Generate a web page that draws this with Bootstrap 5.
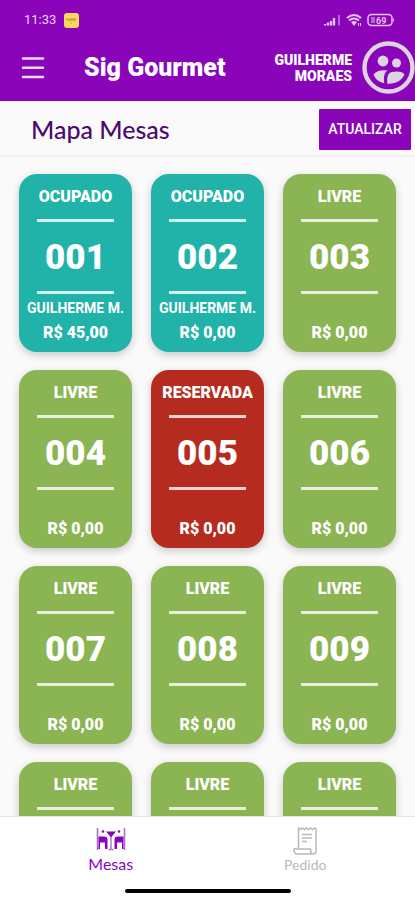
<!DOCTYPE html>
<html lang="pt-BR">
<head>
<meta charset="utf-8">
<meta name="viewport" content="width=device-width, initial-scale=1">
<title>Sig Gourmet</title>
<link href="https://cdn.jsdelivr.net/npm/bootstrap@5.3.0/dist/css/bootstrap.min.css" rel="stylesheet">
<style>
  :root { --brand: #8a05b9; }
  body { font-family: Roboto, "Liberation Sans", sans-serif; background: #fafafa; }
  .app-top { background: var(--brand); }
  .status-bar { height: 34px; padding: 6px 20px 0 24px; color: #ecd3f6; font-size: 13px; line-height: 28px; }
  .app-bar { height: 67px; padding-left: 20px; }
  .menu-btn { width: 26px; height: 26px; }
  .brand-name { font-size: 25px; line-height: 32px; font-weight: 900; margin-left: 38px; }
  .user-name { font-size: 14px; line-height: 16px; font-weight: 900; margin-right: 10px; }
  .title-bar { height: 56px; padding: 2px 4px 0 31px; border-bottom: 2px solid #f1f1f1; }
  .page-title { font-family: Lato, sans-serif; font-size: 25px; line-height: 32px; color: #4a0a70; }
  .refresh-btn { background: var(--brand); font-size: 14px; line-height: 20px; font-weight: 500; height: 41px; width: 92px; border-radius: 1px; }
  .refresh-btn:hover { background: #74049c; }
  .tables-area { overflow-y: auto; scrollbar-width: none; min-height: 0; padding: 17px 19px; }
  .tables-area::-webkit-scrollbar { display: none; }
  .tables-grid { display: grid; grid-template-columns: repeat(3, 1fr); gap: 18px 19px; }
  .mesa { min-height: 178px; padding: 13px 0 8px; border-radius: 18px; background: #8bb453; box-shadow: 0 3px 9px rgba(0, 0, 0, .2); white-space: nowrap; }
  .mesa-busy { background: #21b2a9; }
  .mesa-reserved { background: #b52b20; }
  .mesa-state { font-size: 16px; line-height: 20px; font-weight: 900; }
  .mesa-number { width: 68%; height: 75px; margin-top: 12px; padding-top: 1px; border: solid rgba(255, 255, 255, .8); border-width: 3px 0; font-size: 35px; line-height: 69px; font-weight: 900; }
  .mesa-waiter { height: 28px; font-size: 14px; line-height: 28px; font-weight: 700; }
  .mesa-price { font-size: 16px; line-height: 22px; font-weight: 900; }
  .bottom-nav { height: 84px; background: #fff; border-top: 1px solid #e4e4e4; font-family: Lato, sans-serif; }
  .tab-link { padding: 9px 12px 0 0; color: #b9b9b9; font-size: 14px; line-height: 20px; }
  .tab-link.active { padding: 9px 0 0 14px; color: var(--brand); font-size: 16px; }
  .home-bar { width: 40%; height: 4px; background: #000; bottom: 7px; }
</style>
<script src="https://cdn.jsdelivr.net/npm/bootstrap@5.3.0/dist/js/bootstrap.bundle.min.js"></script>
</head>
<body>
<div class="vh-100 d-flex flex-column overflow-hidden">
  <header class="app-top text-white flex-shrink-0">
    <div class="status-bar d-flex align-items-center">
      <span>11:33</span>
      <svg class="ms-2" width="15" height="15" viewBox="0 0 15 15" aria-hidden="true"><rect width="15" height="15" rx="3" fill="#f8d85c"/><path d="M3 7V5M5 7h2V5M9 5v2M11 5v2M3 7h9" stroke="#b8923a" fill="none"/><path d="M7 10h1" stroke="#b8923a"/></svg>
      <svg class="ms-auto" width="17" height="14" viewBox="0 0 17 14" aria-hidden="true"><path d="M1 12.500v-1.500M4 12.500v-3M7 12.500V8M10 12.500V5" stroke="#e6c3f3" stroke-width="2.300"/><path d="M15 12.500V2" stroke="#b566d3" stroke-width="2"/></svg>
      <svg class="ms-1" width="18" height="14" viewBox="0 0 18 14" fill="none" stroke="#e6c3f3" aria-hidden="true"><path d="M2 5q7-6 14 0M4 7.500q5-4 10 0" stroke-width="2"/><path d="M6 9q3-2 6 0l-3 4z" fill="#e6c3f3" stroke="none"/><path d="M13.500 10v3M15.500 10v3"/></svg>
      <svg class="ms-1" width="28" height="14" viewBox="0 0 28 14" aria-hidden="true"><rect x="1" y="1.500" width="24" height="11" rx="3.500" fill="none" stroke="#e6c3f3" stroke-width="1.500"/><path d="M26 5q2 2 0 4z" fill="#e6c3f3"/><rect x="4" y="4" width="4" height="6" fill="#b566d3"/><text x="9" y="10.500" font-size="9" font-weight="700" fill="#e6c3f3">69</text></svg>
    </div>
    <div class="app-bar d-flex align-items-center">
      <button type="button" class="menu-btn btn p-0 border-0 d-flex" aria-label="Menu">
        <svg width="26" height="26" viewBox="0 0 26 26" stroke="#efdcf7" stroke-width="2.600" stroke-linecap="round"><path d="M3 3.500h20M3 12.800h20M3 22h20"/></svg>
      </button>
      <h1 class="brand-name mb-0 text-nowrap">Sig Gourmet</h1>
      <div class="user-name ms-auto text-end">GUILHERME<br>MORAES</div>
      <svg class="flex-shrink-0" width="53" height="53" viewBox="0 0 53 53" fill="#dcd4df" aria-hidden="true">
        <circle cx="26.500" cy="26.500" r="24" fill="none" stroke="#dcd4df" stroke-width="4.400"/>
        <circle cx="21" cy="20" r="5.400"/><circle cx="34.500" cy="22" r="4.500"/>
        <path d="M11.500 33.500C14 30 20 28.500 25.500 29.500C22 32 21.500 36 22.300 42.300C17 41 13 38 11.500 33.500Z"/>
        <path d="M25.300 42.700C24.500 33 27 30.500 34.500 30.500C38.500 30.500 41.500 31.800 42.500 33.300C40 39.500 33 43.500 25.300 42.700Z"/>
      </svg>
    </div>
  </header>

  <div class="title-bar d-flex align-items-center justify-content-between flex-shrink-0">
    <h2 class="page-title mb-0">Mapa Mesas</h2>
    <button type="button" class="refresh-btn btn border-0 p-0 text-white">ATUALIZAR</button>
  </div>

  <main class="tables-area flex-grow-1">
    <div class="tables-grid">
      <button type="button" class="mesa mesa-busy border-0 text-white d-flex flex-column align-items-center"><span class="mesa-state">OCUPADO</span><span class="mesa-number">001</span><span class="mesa-waiter">GUILHERME M.</span><span class="mesa-price">R$ 45,00</span></button>
      <button type="button" class="mesa mesa-busy border-0 text-white d-flex flex-column align-items-center"><span class="mesa-state">OCUPADO</span><span class="mesa-number">002</span><span class="mesa-waiter">GUILHERME M.</span><span class="mesa-price">R$ 0,00</span></button>
      <button type="button" class="mesa border-0 text-white d-flex flex-column align-items-center"><span class="mesa-state">LIVRE</span><span class="mesa-number">003</span><span class="mesa-waiter"></span><span class="mesa-price">R$ 0,00</span></button>
      <button type="button" class="mesa border-0 text-white d-flex flex-column align-items-center"><span class="mesa-state">LIVRE</span><span class="mesa-number">004</span><span class="mesa-waiter"></span><span class="mesa-price">R$ 0,00</span></button>
      <button type="button" class="mesa mesa-reserved border-0 text-white d-flex flex-column align-items-center"><span class="mesa-state">RESERVADA</span><span class="mesa-number">005</span><span class="mesa-waiter"></span><span class="mesa-price">R$ 0,00</span></button>
      <button type="button" class="mesa border-0 text-white d-flex flex-column align-items-center"><span class="mesa-state">LIVRE</span><span class="mesa-number">006</span><span class="mesa-waiter"></span><span class="mesa-price">R$ 0,00</span></button>
      <button type="button" class="mesa border-0 text-white d-flex flex-column align-items-center"><span class="mesa-state">LIVRE</span><span class="mesa-number">007</span><span class="mesa-waiter"></span><span class="mesa-price">R$ 0,00</span></button>
      <button type="button" class="mesa border-0 text-white d-flex flex-column align-items-center"><span class="mesa-state">LIVRE</span><span class="mesa-number">008</span><span class="mesa-waiter"></span><span class="mesa-price">R$ 0,00</span></button>
      <button type="button" class="mesa border-0 text-white d-flex flex-column align-items-center"><span class="mesa-state">LIVRE</span><span class="mesa-number">009</span><span class="mesa-waiter"></span><span class="mesa-price">R$ 0,00</span></button>
      <button type="button" class="mesa border-0 text-white d-flex flex-column align-items-center"><span class="mesa-state">LIVRE</span><span class="mesa-number"></span></button>
      <button type="button" class="mesa border-0 text-white d-flex flex-column align-items-center"><span class="mesa-state">LIVRE</span><span class="mesa-number"></span></button>
      <button type="button" class="mesa border-0 text-white d-flex flex-column align-items-center"><span class="mesa-state">LIVRE</span><span class="mesa-number"></span></button>
    </div>
  </main>

  <nav class="bottom-nav position-relative d-flex flex-shrink-0" aria-label="Principal">
    <a href="#mesas" class="tab-link active w-50 text-decoration-none d-flex flex-column align-items-center" aria-current="page">
      <svg width="30" height="28" viewBox="0 0 30 28" fill="currentColor" aria-hidden="true"><path d="M1.500 2v22M28.500 2v22" stroke="#a873c5" stroke-width="1.600"/><path d="M2.500 10.500h6q3 0 3 3V23H9v-6.500H4V23H2.500zM27.500 10.500h-6q-3 0-3 3V23H21v-6.500h5V23h1.500z"/><circle cx="7" cy="5.500" r="1.300"/><circle cx="23" cy="5.500" r="1.300"/><path d="M10 5.500h10L15 11.500z"/><path d="M15 11v12.500M12.500 23.500h5" stroke="#a873c5" stroke-width="1.400"/></svg>
      <span>Mesas</span>
    </a>
    <a href="#pedido" class="tab-link w-50 text-decoration-none d-flex flex-column align-items-center">
      <svg width="26" height="29" viewBox="0 0 26 29" fill="none" stroke="currentColor" stroke-width="1.500" aria-hidden="true"><path d="M6.500 22.500V2l2 1.500 2-1.500 2 1.500 2-1.500 2 1.500 2-1.500 2 1.500 2-1.500 1.500 1V25q0 3-3 3H5q-3 0-3-5h16.500q0 5 2.500 5"/><path d="M10 8.500h10M10 12h10M10 15.500h5"/></svg>
      <span>Pedido</span>
    </a>
    <div class="home-bar position-absolute start-50 translate-middle-x rounded-pill"></div>
  </nav>
</div>
</body>
</html>
